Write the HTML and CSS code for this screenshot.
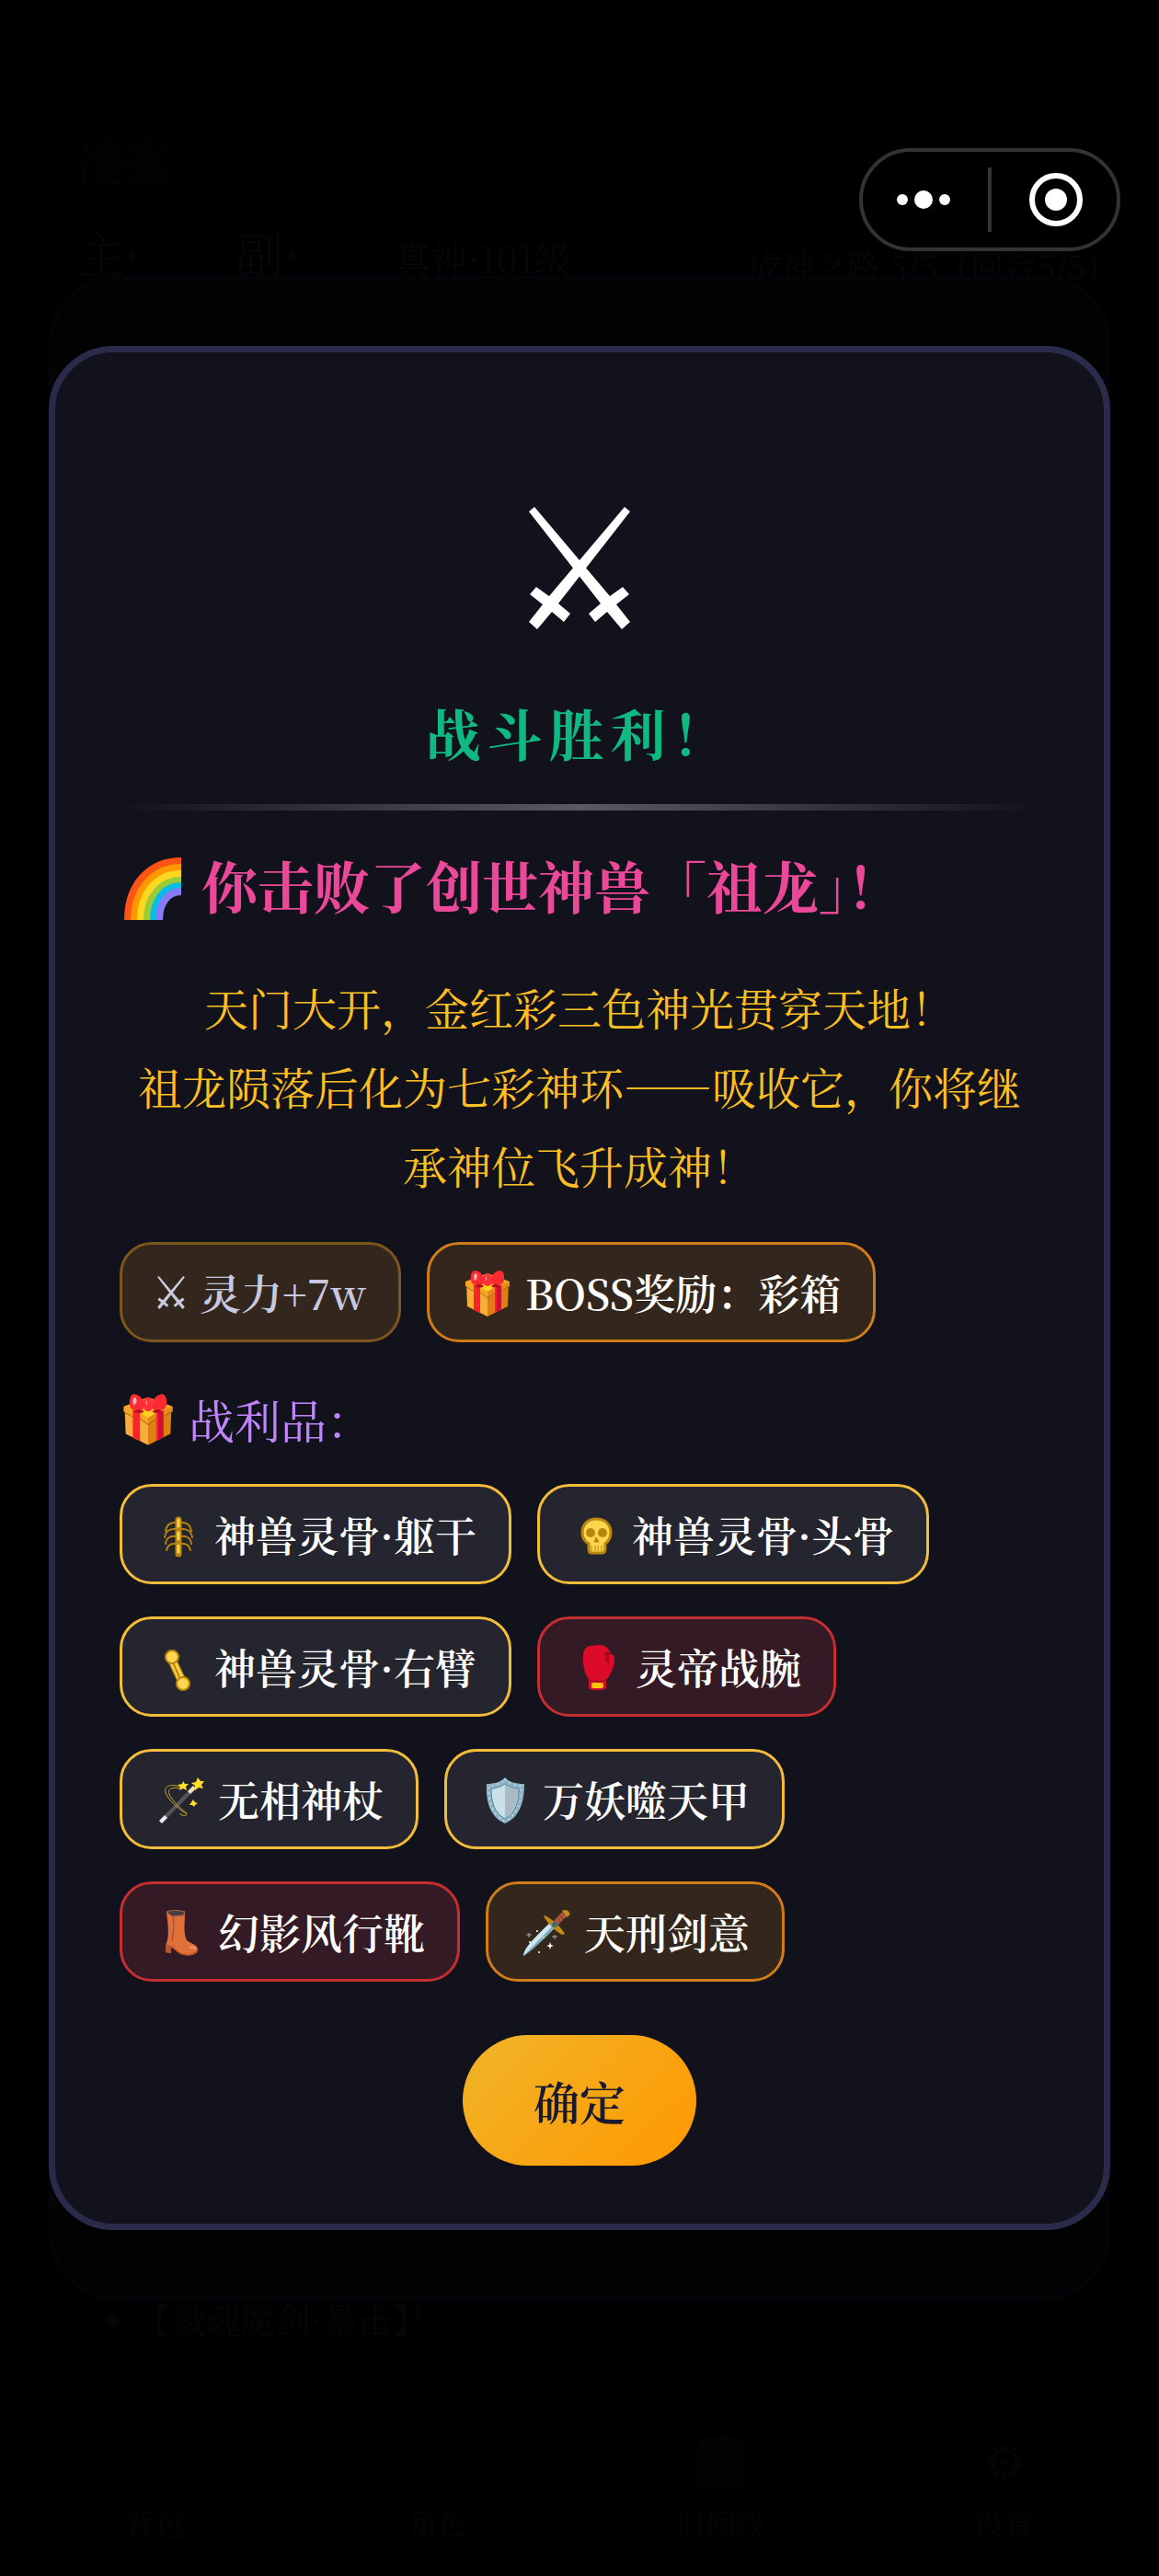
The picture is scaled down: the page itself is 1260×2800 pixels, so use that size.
FILE: index.html
```html
<!DOCTYPE html>
<html lang="zh-CN">
<head>
  <meta charset="UTF-8">
  <meta name="viewport" content="width=device-width, initial-scale=1.0">
  <title>战斗胜利</title>
  <link rel="stylesheet" href="styles.css">
</head>
<body>
  <!-- Shared icons -->
  <svg class="defs" aria-hidden="true">
    <symbol id="swords" viewBox="0 0 110 133">
      <path fill="currentColor" d="M0 5 6 0 88 97 102 87 109 95 95 106 110 125 101 133 85 114 72 125 65 116 78 105Z"/>
      <path fill="currentColor" d="M110 5 104 0 22 97 8 87 1 95 15 106 0 125 9 133 25 114 38 125 45 116 32 105Z"/>
    </symbol>
    <symbol id="gift" viewBox="0 0 56 56">
      <path d="M5 16 28 26V54L6 43Z" fill="#f9ae3c"/>
      <path d="M51 16 28 26V54L50 43Z" fill="#dd7f12"/>
      <path d="M4 16 28 7 52 16V21L28 32 4 21Z" fill="#f6a623"/>
      <path d="M28 32 52 21V16L28 26Z" fill="#e38b17"/>
      <path d="M13 19 20 22V50L13 47ZM36 23 43 20V46L36 50Z" fill="#f8232d"/>
      <path d="M38 22 43 20V46L38 49Z" fill="#cf1030"/>
      <path d="M5 22 14 27M20 28 28 34 36 28M43 26 51 21" stroke="#b96a0a" fill="none"/>
      <path d="M20 22 28 18 36 22 28 27Z" fill="#ffd21f"/>
      <path d="M13 19C8 17 9 3 15 4 21 5 24 11 26 15 24 20 18 21 13 19ZM43 19C48 17 47 3 41 4 35 5 32 11 30 15 32 20 38 21 43 19Z" fill="#fb2a33"/>
      <ellipse cx="28" cy="14" rx="5" ry="7" fill="#ff3038"/>
      <path d="M15 7C12 9 13 13 14 15 17 13 18 9 15 7ZM27 10C25 12 26 15 27 15Z" fill="#ffb3bd"/>
      <path d="M24 21C18 17 16 20 14 21 19 23 22 23 24 21ZM32 21C38 17 40 20 42 21 37 23 34 23 32 21Z" fill="#b80d24"/>
    </symbol>
    <symbol id="rainbow" viewBox="0 0 62 68">
      <g fill="none" stroke-width="8">
        <path d="M4 68C4 28 29 4 62 4" stroke="#fd5316"/>
        <path d="M11 68C11 34 33 11 62 11" stroke="#ff9800"/>
        <path d="M18 68C18 38 36 18 62 18" stroke="#fdd81f"/>
        <path d="M25 68C25 43 40 25 62 25" stroke="#9ccb3a"/>
        <path d="M32 68C32 47 43 31 62 31" stroke="#03bfe6"/>
        <path d="M38 68C38 50 47 37 62 37" stroke="#867cf5"/>
      </g>
    </symbol>
    <symbol id="ribs" viewBox="0 0 56 56">
      <g fill="none" stroke="#b8860b" stroke-width="2" stroke-linecap="round">
        <path d="M26 15C17 14 13 17 12 24M26 15C35 14 39 17 40 24M26 22C16 21 12 24 11 31M26 22C36 21 40 24 41 31M26 30C17 29 13 31 12 38M26 30C35 29 39 31 40 38M26 38C18 37 14 39 13 45M26 38C34 37 38 39 39 45"/>
        <path d="M26 12V49" stroke-width="7"/>
        <path d="M26 12V49" stroke="#ffd54f" stroke-width="3" stroke-dasharray="7 7"/>
      </g>
    </symbol>
    <symbol id="skull" viewBox="0 0 56 56">
      <path d="M26 11C16 11 11 18 11 26 11 32 13 35 18 38V44C18 47 19 48 21 48H32C35 48 36 47 36 44V38C40 35 42 32 42 26 42 18 37 11 26 11Z" fill="#ffd54f" stroke="#b8860b" stroke-width="3"/>
      <circle cx="20" cy="26" r="5" fill="#b8860b"/>
      <circle cx="33" cy="26" r="5" fill="#b8860b"/>
      <path d="M26 31 29 36H24ZM21 40V46M25 40V46M28 40V46M32 40V46" fill="#b8860b" stroke="#b8860b" stroke-width="1"/>
    </symbol>
    <symbol id="bone" viewBox="0 0 56 56">
      <path d="M18 18 31 46" stroke="#b8860b" stroke-width="10"/>
      <path d="M18 18 31 46" stroke="#ffd54f" stroke-width="7"/>
      <path d="M20 23 28 41" stroke="#b8860b" stroke-width="2"/>
      <circle cx="19" cy="17" r="7" fill="#ffd54f" stroke="#b8860b" stroke-width="2"/>
      <circle cx="31" cy="46" r="7" fill="#ffd54f" stroke="#b8860b" stroke-width="2"/>
    </symbol>
    <symbol id="glove" viewBox="0 0 56 56">
      <path d="M18 36H37V51C34 54 21 54 18 51Z" fill="#c8102e"/>
      <path d="M19 5C13 6 11 14 12 23 13 31 15 40 20 42H37C42 36 46 28 46 18 46 15 44 14 42 14 40 7 36 4 29 4Z" fill="#dd0b2a"/>
      <path d="M34 14C37 10 42 11 42 14 38 14 41 18 40 24 36 24 36 19 37 16Z" fill="#a30a26"/>
      <path d="M18 42C24 44 32 44 37 42" stroke="#a30a26" fill="none"/>
      <rect x="21" y="45" width="13" height="6" rx="2" fill="#ffc107"/>
    </symbol>
    <symbol id="wand" viewBox="0 0 56 56">
      <path d="M5 51 42 13 45 16 8 54Z" fill="#555556"/>
      <path d="M5 51 11 45 14 48 8 54Z" fill="#e6e5f6"/>
      <path d="M36 19 42 13 45 16 39 22Z" fill="#f3e0c0"/>
      <path d="M28 14C14 10 7 15 15 26 23 37 33 42 35 44 34 47 29 45 27 43M29 16C17 14 12 17 18 26 23 33 31 40 35 43" fill="none" stroke="#c9a72a" stroke-width="1"/>
      <path d="M47 4 50 8 54 8 51 12 53 16 48 15 44 18 44 13 40 10 45 9ZM31 8 33 11 37 11 34 14 35 18 31 16 27 18 28 14 25 12 30 11ZM42 28 44 31 47 32 44 34 43 36 41 34 38 34 40 31Z" fill="#fce028"/>
    </symbol>
    <symbol id="shield" viewBox="0 0 56 56">
      <path d="M28 4C33 9 39 11 49 11 49 31 44 47 28 54 12 47 7 31 8 11 17 11 23 9 28 4Z" fill="#8fb4c8"/>
      <path d="M28 6C33 11 39 13 46 13 46 31 42 44 28 52 14 44 10 31 10 13 17 13 23 11 28 6Z" fill="none" stroke="#dbe8f0" stroke-dasharray="1 5" stroke-width="2"/>
      <path d="M28 11C33 14 37 16 43 16 43 31 40 42 28 49 16 42 13 31 13 16 19 16 23 14 28 11Z" fill="#c8e0e6" stroke="#4d8296"/>
      <path d="M28 12C33 15 37 16 42 17 42 31 39 41 28 48Z" fill="#a9bac4"/>
    </symbol>
    <symbol id="boot" viewBox="0 0 56 56">
      <path d="M13 6C18 4 27 4 33 6 33 20 31 29 35 37 41 42 47 41 47 48 46 53 36 55 29 52 24 50 22 46 18 45V51L12 50C12 45 12 41 14 37 16 27 14 16 13 6Z" fill="#e0703a"/>
      <path d="M13 6C18 4 27 4 33 6L31 10 19 11Z" fill="#4a3c40" stroke="#a8664c"/>
      <path d="M20 11C22 20 20 31 19 38" fill="none" stroke="#9b4526"/>
      <path d="M12 42C18 42 22 45 25 48 31 54 41 53 47 47 46 54 36 55 29 52 24 50 22 46 18 45V51L12 50Z" fill="#b9552a"/>
      <path d="M38 45C41 44 44 45 44 47" fill="none" stroke="#ff9b62" stroke-width="2"/>
    </symbol>
    <symbol id="dagger" viewBox="0 0 56 56">
      <path d="M3 54C4 46 10 39 33 17L38 23C18 43 10 50 3 54Z" fill="#7fabc0"/>
      <path d="M3 54C4 46 10 39 33 17L36 20Z" fill="#c9e8ef"/>
      <path d="M35 17 45 6 50 11 40 21Z" fill="#9a4a32"/>
      <path d="M38 14 42 19M41 11 45 16M44 8 48 13" stroke="#c9714f"/>
      <path d="M25 10C31 11 44 22 48 30L45 31C38 27 28 18 25 10ZM45 5C49 2 55 6 53 10L50 12Z" fill="#c28c14"/>
      <circle cx="37" cy="20" r="3" fill="#386f8a"/>
      <path d="M32 39 33 42 36 43 33 44 32 47 31 44 28 43 31 42Z" fill="#fff"/>
      <path d="M9 29V34M6 31H12M37 31V36M34 33H40" stroke="#b3a79d" stroke-width="1"/>
      <path d="M17 27H19M9 39H11M19 50H21M24 34H26" stroke="#d7cdc4" stroke-width="2"/>
    </symbol>
  </svg>

  <!-- Game screen behind the dialogs -->
  <main class="game">
    <h1 class="player">凌玄</h1>
    <div class="status">
      <p class="level"><span class="soul">主·</span><span class="soul">副·</span>真神·101级</p>
      <p class="quest">成神之路 5/5（回合5/5）</p>
    </div>
    <p class="log">✦ 【戮魂魔剑·暴击<span class="half">】</span>！</p>
    <nav class="tabs">
      <a href="#bag"><span class="tab-icon bag"></span>背包</a>
      <a href="#role"><span class="tab-icon role"></span>角色</a>
      <a href="#timeline"><span class="tab-icon book"></span>时间线</a>
      <a href="#settings"><span class="tab-icon gear">⚙</span>设置</a>
    </nav>
  </main>

  <div class="overlay">
    <div class="back-modal"></div>
  </div>

  <div class="overlay">
    <section class="modal" role="dialog" aria-labelledby="result-title">
      <svg class="hero" aria-hidden="true"><use href="#swords"/></svg>
      <h2 class="title" id="result-title">战斗胜利！</h2>
      <div class="divider"></div>

      <h3 class="defeated">
        <svg class="rainbow" aria-hidden="true"><use href="#rainbow"/></svg>
        <span>你击败了创世神兽「祖龙<span class="half">」</span>！</span>
      </h3>
      <p class="story">天门大开，金红彩三色神光贯穿天地！<br>祖龙陨落后化为七彩神环——吸收它，你将继承神位飞升成神！</p>

      <ul class="chips">
        <li class="chip power"><svg class="small-swords" aria-hidden="true"><use href="#swords"/></svg>灵力+7w</li>
        <li class="chip orange"><svg class="icon" aria-hidden="true"><use href="#gift"/></svg>BOSS奖励：彩箱</li>
      </ul>

      <h4 class="loot-title"><svg class="icon" aria-hidden="true"><use href="#gift"/></svg>战利品：</h4>
      <ul class="chips">
        <li class="chip gold relic"><svg class="icon" aria-hidden="true"><use href="#ribs"/></svg>神兽灵骨·躯干</li>
        <li class="chip gold relic"><svg class="icon" aria-hidden="true"><use href="#skull"/></svg>神兽灵骨·头骨</li>
        <li class="chip gold relic"><svg class="icon" aria-hidden="true"><use href="#bone"/></svg>神兽灵骨·右臂</li>
        <li class="chip red"><svg class="icon" aria-hidden="true"><use href="#glove"/></svg>灵帝战腕</li>
        <li class="chip gold"><svg class="icon" aria-hidden="true"><use href="#wand"/></svg>无相神杖</li>
        <li class="chip gold"><svg class="icon" aria-hidden="true"><use href="#shield"/></svg>万妖噬天甲</li>
        <li class="chip red"><svg class="icon" aria-hidden="true"><use href="#boot"/></svg>幻影风行靴</li>
        <li class="chip orange"><svg class="icon" aria-hidden="true"><use href="#dagger"/></svg>天刑剑意</li>
      </ul>

      <button type="button" class="confirm">确定</button>
    </section>
  </div>

  <!-- Mini program capsule -->
  <div class="capsule">
    <button type="button" class="more" aria-label="更多">
      <svg width="60" height="22" viewBox="0 0 60 22"><g fill="#fff"><circle cx="7" cy="11" r="6"/><circle cx="30" cy="11" r="10"/><circle cx="53" cy="11" r="6"/></g></svg>
    </button>
    <span class="capsule-line"></span>
    <button type="button" class="close" aria-label="关闭">
      <svg width="58" height="58" viewBox="0 0 58 58"><circle cx="29" cy="29" r="26" fill="none" stroke="#fff" stroke-width="6"/><circle cx="29" cy="29" r="12" fill="#fff"/></svg>
    </button>
  </div>
</body>
</html>
```
FILE: styles.css
```css
* {
  box-sizing: border-box;
}
body {
  margin: 0;
  background-color: #000;
  color: #fff;
  font-family: "Noto Serif CJK SC", "Noto Sans CJK SC", serif;
}
h1, h2, h3, h4, p, ul {
  margin: 0;
  padding: 0;
  font-weight: normal;
}
.defs {
  position: absolute;
  width: 0;
  height: 0;
}
/* half-width closing bracket before another mark */
.half {
  font-feature-settings: "halt" 1;
}

/* Game screen, dimmed */
.game {
  display: flex;
  flex-direction: column;
  min-height: 100vh;
  padding: 125px 14px 35px;
  color: #070707;
}
.player {
  align-self: flex-start;
  margin-left: 30px;
  padding: 14px 40px;
  border-radius: 30px;
  background-color: #010100;
  color: #060400;
  font-size: 52px;
  line-height: 72px;
}
.status {
  display: flex;
  justify-content: space-between;
  padding: 8px 30px 0 70px;
}
.level {
  font-size: 40px;
  line-height: 84px;
}
.soul {
  display: inline-block;
  width: 172px;
  font-size: 52px;
}
.quest {
  padding-top: 14px;
  font-size: 36px;
  line-height: 84px;
}
.log {
  margin-top: auto;
  padding-left: 92px;
  color: #060605;
  font-size: 38px;
  line-height: 50px;
}
.tabs {
  display: grid;
  grid-template-columns: repeat(4, 1fr);
  margin-top: 104px;
}
.tabs a {
  display: flex;
  flex-direction: column;
  align-items: center;
  gap: 14px;
  color: #050505;
  font-size: 32px;
  line-height: 48px;
  text-decoration: none;
}
.tab-icon {
  width: 52px;
  height: 54px;
  border-radius: 16px 16px 6px 6px;
}
.bag {
  background-color: #030100;
}
.role {
  width: 34px;
  border-radius: 17px;
  background-color: #000103;
}
.book {
  background-color: #030303;
}
.gear {
  font-size: 52px;
  text-align: center;
}

/* Dialogs */
.overlay {
  position: absolute;
  inset: 0;
  display: flex;
  align-items: center;
  padding: 0 53px;
}
.back-modal {
  width: 100%;
  height: 2200px;
  border: 7px solid #040408;
  border-radius: 70px;
  background-color: #020203;
}
.modal {
  display: flex;
  flex-direction: column;
  width: 100%;
  padding: 63px 70px;
  border: 7px solid #2a2a4a;
  border-radius: 70px;
  background-color: #12121d;
}
.hero {
  align-self: center;
  width: 110px;
  height: 133px;
  margin-top: 105px;
}
.title {
  margin-top: 70px;
  color: #10b981;
  font-size: 60px;
  font-weight: bold;
  letter-spacing: 7px;
  line-height: 84px;
  text-align: center;
}
.divider {
  height: 7px;
  margin: 36px 0 35px;
  background: linear-gradient(90deg, transparent, rgba(255, 255, 255, 0.3), transparent);
}
.defeated {
  display: flex;
  align-items: center;
  color: #ec4899;
  font-size: 61px;
  font-weight: bold;
  line-height: 92px;
}
.rainbow {
  width: 62px;
  height: 68px;
  margin: 8px 22px 0 5px;
}
.story {
  margin: 44px 0 40px;
  color: #fbbf24;
  font-size: 48px;
  line-height: 86px;
  text-align: center;
}
.chips {
  display: flex;
  flex-wrap: wrap;
  gap: 35px 28px;
  list-style: none;
}
.chip {
  display: flex;
  align-items: center;
  height: 109px;
  padding: 0 35px;
  border: 3px solid;
  border-radius: 35px;
  font-size: 45px;
  font-weight: 600;
}
.icon {
  width: 56px;
  height: 56px;
  margin-right: 13px;
}
.relic .icon {
  margin-right: 9px;
}
.small-swords {
  width: 30px;
  height: 36px;
  margin: 0 16px 0 3px;
}
.power {
  border-color: #7d561e;
  background-color: #33261c;
  color: #c8c8e0;
}
.orange {
  border-color: #d07c1a;
  background-color: #33261c;
}
.gold {
  border-color: #f3bd3a;
  background-color: #252530;
}
.red {
  border-color: #c62f32;
  background-color: #331a24;
}
.loot-title {
  display: flex;
  align-items: center;
  margin: 48px 0 36px;
  color: #c084fc;
  font-size: 50px;
  line-height: 70px;
}
.loot-title .icon {
  width: 62px;
  height: 62px;
}
.confirm {
  align-self: center;
  margin-top: 58px;
  padding: 0 77px;
  border: none;
  border-radius: 71px;
  background: linear-gradient(135deg, #f0b429, #ff9800);
  color: #1a1a2e;
  font-family: inherit;
  font-size: 50px;
  font-weight: 600;
  line-height: 142px;
  cursor: pointer;
}

/* Capsule lies over everything */
.capsule {
  position: absolute;
  top: 161px;
  right: 42px;
  display: flex;
  align-items: center;
  width: 284px;
  height: 112px;
  border: 4px solid #333;
  border-radius: 56px;
}
.capsule button {
  display: flex;
  flex: 1;
  align-items: center;
  justify-content: center;
  padding: 0;
  border: none;
  background: none;
}
.capsule .more {
  padding-right: 4px;
}
.capsule .close {
  padding-left: 4px;
}
.capsule-line {
  width: 4px;
  height: 70px;
  background-color: #333;
}
```
